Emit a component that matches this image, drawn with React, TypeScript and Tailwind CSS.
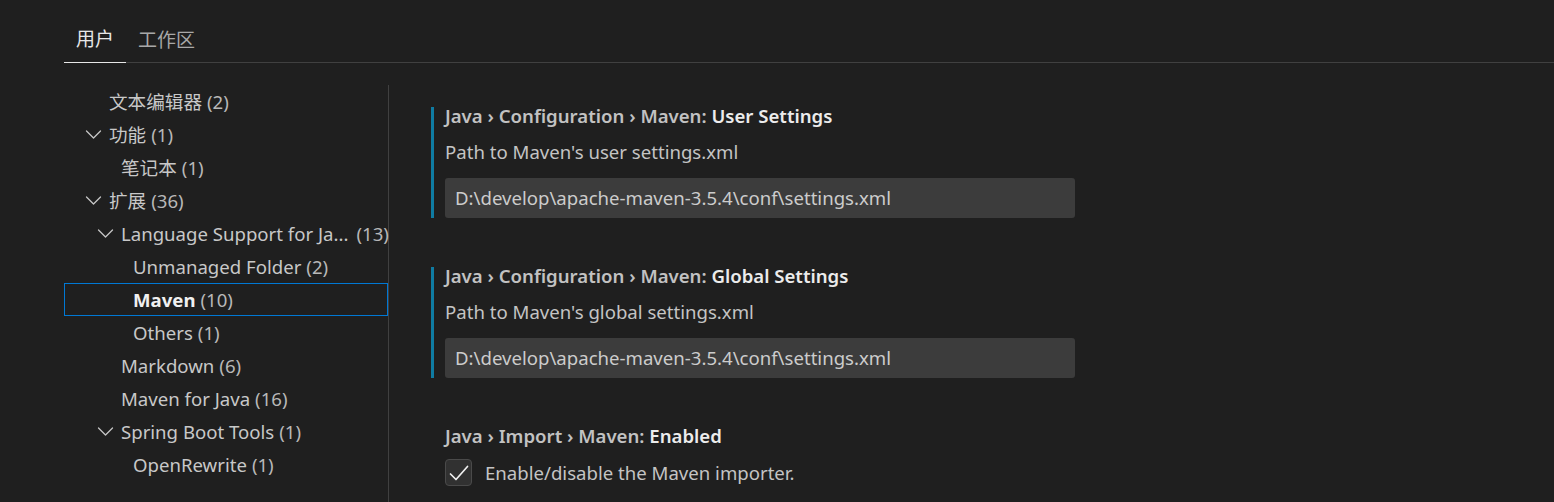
import React from 'react';

interface TreeItem {
  label: string;
  count: string;
  level: number;
  expandable?: boolean;
  selected?: boolean;
  bold?: boolean;
}

const treeItems: TreeItem[] = [
  { label: '文本编辑器', count: '(2)', level: 0 },
  { label: '功能', count: '(1)', level: 0, expandable: true },
  { label: '笔记本', count: '(1)', level: 1 },
  { label: '扩展', count: '(36)', level: 0, expandable: true },
  { label: 'Language Support for Ja...', count: '(13)', level: 1, expandable: true },
  { label: 'Unmanaged Folder', count: '(2)', level: 2 },
  { label: 'Maven', count: '(10)', level: 2, selected: true, bold: true },
  { label: 'Others', count: '(1)', level: 2 },
  { label: 'Markdown', count: '(6)', level: 1 },
  { label: 'Maven for Java', count: '(16)', level: 1 },
  { label: 'Spring Boot Tools', count: '(1)', level: 1, expandable: true },
  { label: 'OpenRewrite', count: '(1)', level: 2 },
];

const padByLevel = ['pl-[20px]', 'pl-[32px]', 'pl-[44px]'];

const Chevron = () => (
  <svg width="24" height="24" viewBox="0 0 24 24" fill="none">
    <polyline
      points="1.5,8 8.5,15 15.5,8"
      stroke="#c5c5c5"
      strokeWidth="1.3"
      strokeLinecap="round"
      strokeLinejoin="round"
    />
  </svg>
);

const SettingTitle = ({ prefix, name }: { prefix: string; name: string }) => (
  <div className="h-[18px] leading-[18px] font-semibold whitespace-nowrap">
    <span className="text-[#c2c2c2]">{prefix}</span>
    <span className="text-[#ececec]">{name}</span>
  </div>
);

const PathSetting = ({ name, desc }: { name: string; desc: string }) => (
  <div className="border-l-[3px] border-[#0f7ca3] pl-[11px] ml-[42px]">
    <SettingTitle prefix="Java › Configuration › Maven: " name={name} />
    <div className="mt-[15px] h-[24px] leading-[24px] text-[#c4c4c4]">{desc}</div>
    <div className="mt-[14px] w-[630px] h-[40px] bg-[#3c3c3c] rounded-[3px] pl-[10px] flex items-center text-[#cccccc]">
      D:\develop\apache-maven-3.5.4\conf\settings.xml
    </div>
  </div>
);

const App = () => {
  return (
    <div
      className="w-[1554px] h-[502px] overflow-hidden bg-[#1f1f1f] text-[18.6px]"
      style={{ fontFamily: '"Segoe UI", "Noto Sans", "Noto Sans CJK SC", sans-serif' }}
    >
      <div className="ml-[64px] h-[63px] flex items-end border-b border-[#404040] text-[19px]">
        <div className="-mb-px px-[12px] h-[40px] flex items-center border-b border-[#e7e7e7] text-[#e7e7e7] pb-[6px]">
          用户
        </div>
        <div className="-mb-px px-[12px] h-[40px] flex items-center text-[#a8a8a8] pb-[6px]">
          工作区
        </div>
      </div>

      <div className="flex mt-[22px]">
        <div className="w-[325px] ml-[64px] h-[418px] border-r border-[#404040]">
          {treeItems.map((item) => (
            <div
              key={item.label}
              className={`h-[33px] w-[324px] flex items-center border ${
                item.selected ? 'border-[#0078d4]' : 'border-transparent'
              } ${padByLevel[item.level]} text-[#c8c8c8] whitespace-nowrap`}
            >
              <div className="w-[24px] h-[24px] shrink-0">
                {item.expandable && <Chevron />}
              </div>
              <span className={item.bold ? 'font-bold text-[#f0f0f0]' : ''}>{item.label}</span>
              <span className={item.count === '(13)' ? 'ml-[8px] text-[#b8b8b8]' : 'ml-[5px] text-[#b8b8b8]'}>
                {item.count}
              </span>
            </div>
          ))}
        </div>

        <div className="flex-1 pt-[22px]">
          <PathSetting name="User Settings" desc="Path to Maven's user settings.xml" />
          <div className="h-[49px]" />
          <PathSetting name="Global Settings" desc="Path to Maven's global settings.xml" />
          <div className="ml-[56px] mt-[49px]">
            <SettingTitle prefix="Java › Import › Maven: " name="Enabled" />
            <div className="mt-[14px] flex items-center">
              <div className="w-[27px] h-[27px] rounded-[4px] bg-[#313131] border border-[#4a4a4a] flex items-center justify-center">
                <svg width="24" height="24" viewBox="0 0 24 24" fill="none">
                  <polyline
                    points="3.5,13 9,18.5 20.5,5.5"
                    stroke="#f0f0f0"
                    strokeWidth="1.7"
                    strokeLinecap="round"
                    strokeLinejoin="round"
                  />
                </svg>
              </div>
              <span className="ml-[13px] text-[#c4c4c4]">Enable/disable the Maven importer.</span>
            </div>
          </div>
        </div>
      </div>
    </div>
  );
};

export default App;
